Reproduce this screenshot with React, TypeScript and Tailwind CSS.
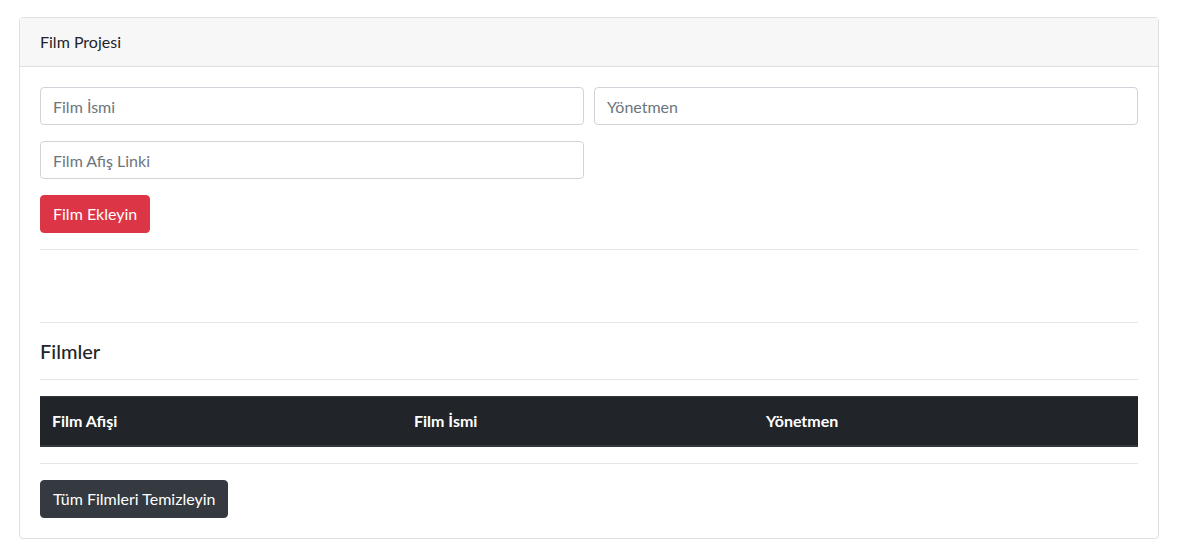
import React from "react";

const font = { fontFamily: '"Segoe UI", Lato, "Noto Sans", sans-serif' };

export default function App() {
  return (
    <div className="min-h-[558px] bg-white text-[#212529]" style={font}>
      <div className="ml-[19px] mt-[17px] w-[1140px] rounded-[4px] border border-[#dfdfdf] bg-white">
        <div className="border-b border-[#dfdfdf] bg-[#f7f7f7] px-5 py-3 text-[16px] leading-6">
          Film Projesi
        </div>
        <div className="p-5">
          <div className="grid grid-cols-2 gap-x-[10px] gap-y-4">
            <input
              type="text"
              placeholder="Film İsmi"
              className="h-[38px] rounded-[4px] border border-[#ced4da] px-3 text-[16px] outline-none placeholder:text-[#6c757d]"
            />
            <input
              type="text"
              placeholder="Yönetmen"
              className="h-[38px] rounded-[4px] border border-[#ced4da] px-3 text-[16px] outline-none placeholder:text-[#6c757d]"
            />
            <input
              type="text"
              placeholder="Film Afiş Linki"
              className="h-[38px] rounded-[4px] border border-[#ced4da] px-3 text-[16px] outline-none placeholder:text-[#6c757d]"
            />
          </div>
          <button
            type="submit"
            className="mt-4 h-[38px] rounded-[4px] border border-[#dc3545] bg-[#dc3545] px-3 text-[16px] leading-6 text-white"
          >
            Film Ekleyin
          </button>
          <hr className="mt-4 border-t border-[#e6e6e6]" />
          <div className="h-[72px]" />
          <hr className="border-t border-[#e6e6e6]" />
          <h5 className="mt-4 text-[20px] font-medium leading-6">Filmler</h5>
          <hr className="mt-4 border-t border-[#e6e6e6]" />
          <div className="mt-4 flex border-y border-t-[#32383e] border-b-2 border-b-[#32383e] bg-[#212529] text-[16px] font-bold leading-6 text-white">
            <div className="w-[362px] p-3">Film Afişi</div>
            <div className="w-[352px] p-3">Film İsmi</div>
            <div className="flex-1 p-3">Yönetmen</div>
          </div>
          <hr className="mt-4 border-t border-[#e6e6e6]" />
          <button
            type="button"
            className="mt-4 h-[38px] rounded-[4px] border border-[#343a40] bg-[#343a40] px-3 text-[16px] leading-6 text-white"
          >
            Tüm Filmleri Temizleyin
          </button>
        </div>
      </div>
    </div>
  );
}
